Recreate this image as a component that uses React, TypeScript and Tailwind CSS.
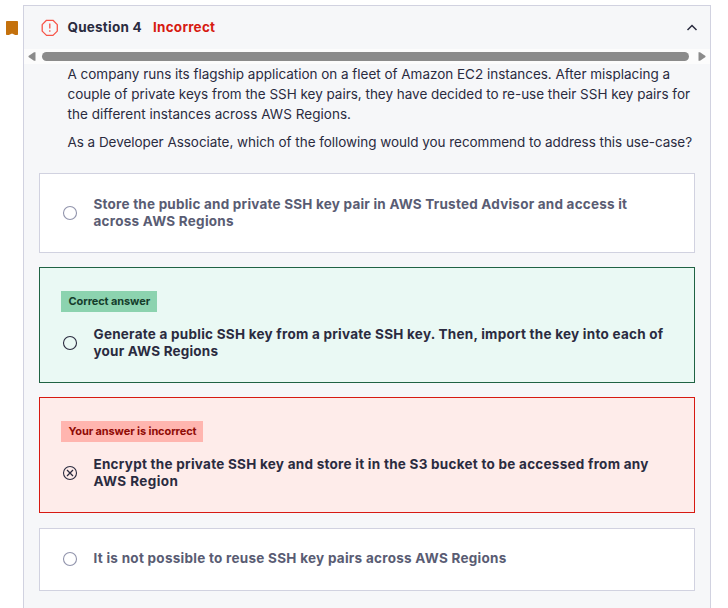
import type { ReactNode } from "react";

type Tone = "plain" | "correct" | "incorrect";

const cardTones: Record<Tone, string> = {
  plain: "border-[#d1d2e0] bg-white text-[#595c73]",
  correct: "border-[#206344] bg-[#eaf9f4] text-[#2a2b3f]",
  incorrect: "border-[#d71a12] bg-[#feecea] text-[#2a2b3f]",
};

function Line({ children, className = "" }: { children: ReactNode; className?: string }) {
  return (
    <span className="block whitespace-nowrap">
      <span className={className}>{children}</span>
    </span>
  );
}

function Radio({ tone }: { tone: Tone }) {
  return (
    <svg
      width="16"
      height="16"
      viewBox="0 0 16 16"
      fill="none"
      className={tone === "plain" ? "shrink-0 text-[#9194ac]" : "shrink-0 text-[#2a2b3f]"}
    >
      <circle cx="8" cy="8" r="6.5" stroke="currentColor" strokeWidth="1.1" />
      {tone === "incorrect" && (
        <path d="M5 5l6 6M11 5l-6 6" stroke="currentColor" strokeWidth="1.3" />
      )}
    </svg>
  );
}

function Answer({ tone, size, badge, children }: { tone: Tone; size: string; badge?: ReactNode; children: ReactNode }) {
  return (
    <div className={`flex w-[656px] shrink-0 flex-col border px-[21px] ${size} ${cardTones[tone]}`}>
      {badge}
      <div className="flex items-center gap-[15.5px] pl-px">
        <Radio tone={tone} />
        <div className="text-[13.5px] font-bold leading-[17px]">{children}</div>
      </div>
    </div>
  );
}

export default function App() {
  return (
    <div className="flex h-[608px] w-[728px] overflow-hidden bg-white pt-[5px] font-['Inter','Liberation_Sans',sans-serif]">
      <div className="w-[23px] shrink-0 pl-[6px] pt-[16px]">
        <svg width="12" height="14" viewBox="0 0 12 14" fill="#c4710d">
          <path d="M.8 0h10.400q.8 0 .8.800v12.400q0 .8-.8.800h-2L6.500 12.700q-.5-.3-1 0L2.800 14h-2q-.8 0-.8-.800V.800Q0 0 .8 0z" />
        </svg>
      </div>
      <main className="flex h-[640px] w-[688px] shrink-0 flex-col border border-[#d1d2e0] bg-[#f6f7f9] text-[#2a2b3f]">
        <header className="flex h-[43px] shrink-0 items-center pl-[17px] pr-[12px] text-[13.5px] font-bold">
          <svg width="18" height="18" viewBox="0 0 18 18" fill="none" stroke="#f75448" strokeWidth="1.3" className="shrink-0">
            <path d="M5.500 1.300h6.500l4.300 4.300v6.500l-4.300 4.300H5.500l-4.300-4.300V5.600z" strokeLinejoin="round" />
            <path d="M8.800 4.600v5M8.800 11.200v1.500" />
          </svg>
          <h2 className="ml-[8.500px] w-[85.500px] whitespace-nowrap tracking-[0.22px]">Question 4</h2>
          <span className="whitespace-nowrap tracking-[0.240px] text-[#d71a12]">Incorrect</span>
          <svg width="12" height="8" viewBox="0 0 12 8" fill="none" stroke="#2a2b3f" strokeWidth="1.500" className="ml-auto">
            <path d="M1.500 6L6 1.500 10.500 6" />
          </svg>
        </header>
        <div className="flex h-[15px] shrink-0 items-center bg-[#fcfcfc] px-[4px]">
          <svg width="8" height="9" viewBox="0 0 8 9" fill="#8b8b8b">
            <path d="M7.500.300v8.400H6L.5 5V4L6 .3z" />
          </svg>
          <div className="ml-[6px] h-[9px] w-[647px] rounded-full bg-[#8b8b8b]" />
          <svg width="8" height="9" viewBox="0 0 8 9" fill="#8b8b8b" className="ml-auto">
            <path d="M.5.300v8.400H2L7.500 5V4L2 .3z" />
          </svg>
        </div>
        <section className="h-[109px] shrink-0 pl-[43.5px] text-[13.5px] leading-[20px]">
          <p>
            <Line className="tracking-[-0.020px]">A company runs its flagship application on a fleet of Amazon EC2 instances. After misplacing a</Line>
            <Line className="tracking-[-0.022px]">couple of private keys from the SSH key pairs, they have decided to re-use their SSH key pairs for</Line>
            <Line className="tracking-[0.035px]">the different instances across AWS Regions.</Line>
          </p>
          <p className="mt-[8px]">
            <Line className="tracking-[-0.042px]">As a Developer Associate, which of the following would you recommend to address this use-case?</Line>
          </p>
        </section>
        <div className="flex flex-col pl-[15px]">
          <Answer tone="plain" size="h-[80px] pt-[22px]">
            <Line className="tracking-[0.217px]">Store the public and private SSH key pair in AWS Trusted Advisor and access it</Line>
            <Line className="tracking-[0.25px]">across AWS Regions</Line>
          </Answer>
          <div className="h-[14px]" />
          <Answer
            tone="correct"
            size="h-[116px] pt-[23px]"
            badge={
              <span className="mb-[14px] flex h-[21px] w-[96px] shrink-0 items-center whitespace-nowrap bg-[#8cd3af] pl-[7.500px] text-[11px] font-bold tracking-[-0.1px] text-[#153d2b]">
                Correct answer
              </span>
            }
          >
            <Line className="tracking-[0.25px]">Generate a public SSH key from a private SSH key. Then, import the key into each of</Line>
            <Line className="tracking-[0.2px]">your AWS Regions</Line>
          </Answer>
          <div className="h-[14px]" />
          <Answer
            tone="incorrect"
            size="h-[116px] pt-[23px]"
            badge={
              <span className="mb-[14px] flex h-[21px] w-[142px] shrink-0 items-center whitespace-nowrap bg-[#ffb5af] pl-[7.500px] text-[11px] font-bold tracking-[-0.1px] text-[#8f0a05]">
                Your answer is incorrect
              </span>
            }
          >
            <Line className="tracking-[0.26px]">Encrypt the private SSH key and store it in the S3 bucket to be accessed from any</Line>
            <Line className="tracking-[0.4px]">AWS Region</Line>
          </Answer>
          <div className="h-[15px]" />
          <Answer tone="plain" size="h-[63px] pt-[21px]">
            <Line className="tracking-[0.27px]">It is not possible to reuse SSH key pairs across AWS Regions</Line>
          </Answer>
        </div>
      </main>
    </div>
  );
}
